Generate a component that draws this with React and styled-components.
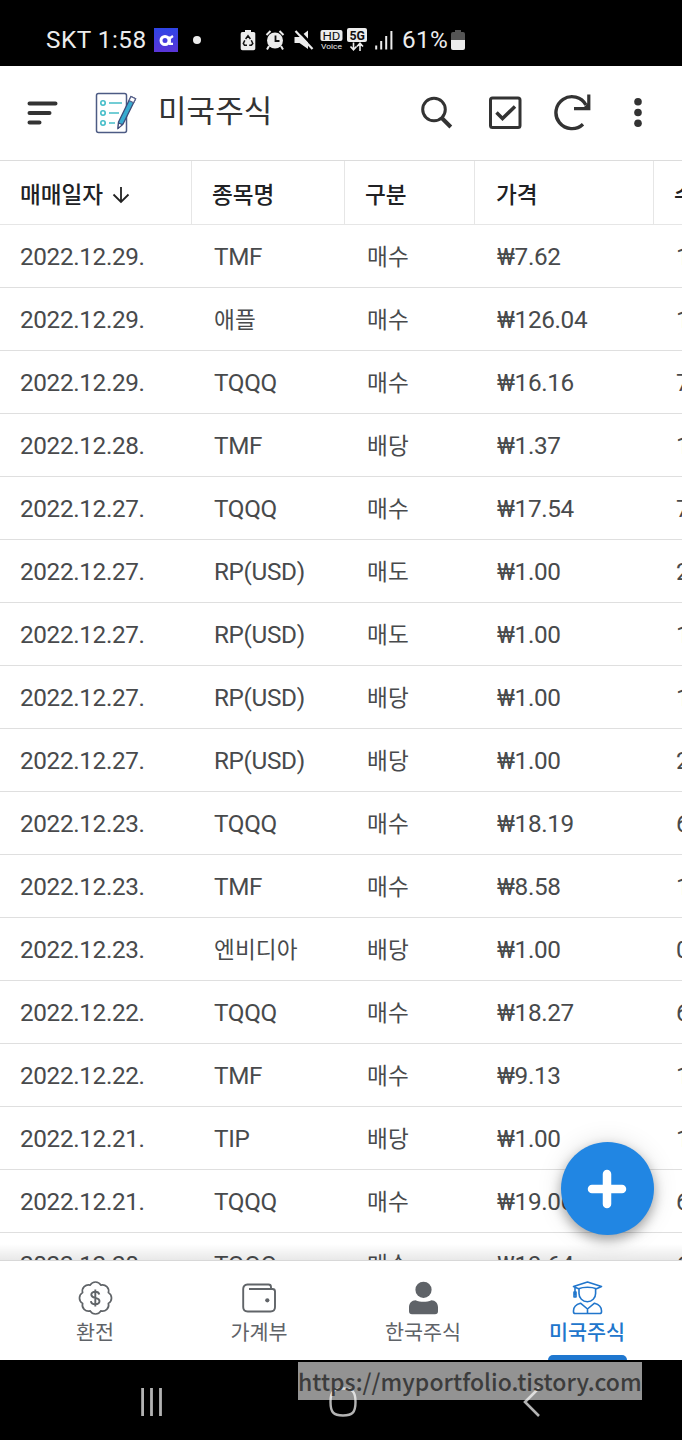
import React from 'react';
import styled, { createGlobalStyle } from 'styled-components';

const GlobalStyle = createGlobalStyle`
  * { box-sizing: border-box; }
  html, body { margin: 0; padding: 0; background: #000; overflow: hidden; }
  body { font-family: Roboto, "Noto Sans CJK KR", sans-serif; }
`;

const Phone = styled.div`
  width: 682px;
  height: 1440px;
  display: flex;
  flex-direction: column;
  background: #fff;
  overflow: hidden;
`;

const StatusBar = styled.header`
  height: 66px;
  flex: none;
  display: flex;
  align-items: center;
  padding: 14px 0 0 46px;
  background: #000;
  color: #ececec;
  font-size: 24.3px;
  line-height: 28px;
`;

const Clock = styled.span`
  width: 108px;
  white-space: nowrap;
  letter-spacing: 0.5px;
`;

const BatteryText = styled.span`
  width: 47px;
  margin-left: 9px;
  white-space: nowrap;
  letter-spacing: 0.3px;
`;

const StatusIcon = styled.svg`
  flex: none;
  display: block;
  margin-left: ${(p) => p.$gap || 0}px;
`;

const AppBar = styled.div`
  height: 94px;
  flex: none;
  display: flex;
  align-items: center;
  padding-left: 26px;
  color: #333;
`;

const Icon = styled.svg`
  flex: none;
  display: block;
  margin-left: ${(p) => p.$gap || 0}px;
`;

const Title = styled.h1`
  margin: -2px 0 0 21px;
  width: 261px;
  font-size: 31px;
  line-height: 40px;
  font-weight: 400;
  letter-spacing: 0.1px;
`;

const Table = styled.main`
  flex: 1;
  min-height: 0;
  overflow: hidden;
  position: relative;
  border-top: 1px solid #dcdcdc;
`;

const Columns = styled.div`
  display: grid;
  grid-template-columns: 192px 153px 130px 179px 28px;
`;

const HeadRow = styled(Columns)`
  height: 64px;
  border-bottom: 1px solid #e6e6e6;
  font-size: 22.6px;
  font-weight: 500;
  color: #202124;
`;

const HeadCell = styled.div`
  display: flex;
  align-items: center;
  gap: 8px;
  padding: 2px 0 0 ${(p) => p.$inset || 20}px;
  border-right: 1px solid #e6e6e6;
  white-space: nowrap;
  overflow: hidden;

  &:last-child { border-right: 0; }
`;

const Row = styled(Columns)`
  height: 63px;
  border-bottom: 1px solid #dfdfdf;
  line-height: 64px;
  color: #484a4c;
`;

const Cell = styled.div`
  padding-left: ${(p) => p.$inset || 20}px;
  padding-top: ${(p) => (p.$hangul ? 1 : 0)}px;
  height: 62px;
  white-space: nowrap;
  overflow: hidden;
  font-size: ${(p) => (p.$hangul ? '22.6px' : '24.3px')};
  letter-spacing: ${(p) => (p.$hangul ? '0.1px' : '-0.35px')};
`;

const BottomFade = styled.div`
  position: absolute;
  left: 0;
  right: 0;
  bottom: 0;
  height: 16px;
  background: linear-gradient(rgba(0, 0, 0, 0), rgba(0, 0, 0, 0.09));
`;

const AddButton = styled.button`
  position: absolute;
  right: 28px;
  bottom: 25px;
  width: 93px;
  height: 93px;
  padding: 0 2px 0 0;
  border: 0;
  border-radius: 50%;
  background: #2186e3;
  display: flex;
  align-items: center;
  justify-content: center;
  box-shadow: 0 5px 12px rgba(0, 0, 0, 0.32), 0 1px 26px rgba(0, 0, 0, 0.13);
`;

const TabBar = styled.nav`
  height: 100px;
  flex: none;
  display: grid;
  grid-template-columns: repeat(4, 164px);
  padding: 0 13px;
  border-top: 1px solid #d8d8d8;
  background: #fff;
`;

const Tab = styled.div`
  position: relative;
  display: flex;
  flex-direction: column;
  align-items: center;
  padding-top: 18px;
  color: ${(p) => (p.$active ? '#2176cc' : '#5f6368')};
  font-size: 20.7px;
  font-weight: ${(p) => (p.$active ? 500 : 400)};
  line-height: 30px;
`;

const TabIcon = styled.svg`
  display: block;
  width: 38px;
  height: 38px;
  margin-bottom: 1px;
`;

const ActiveMark = styled.div`
  position: absolute;
  bottom: 0;
  width: 79px;
  height: 5px;
  border-radius: 5px 5px 0 0;
  background: #1f77cf;
`;

const SystemBar = styled.footer`
  height: 80px;
  flex: none;
  position: relative;
  background: #000;
  display: flex;
  align-items: center;
  padding: 4px 0 0 138px;
`;

const SystemIcon = styled.svg`
  position: relative;
  z-index: 1;
  flex: none;
  display: block;
  margin-left: ${(p) => p.$gap || 0}px;
  stroke: rgba(255, 255, 255, 0.7);
`;

const WatermarkPlate = styled.div`
  position: absolute;
  left: 298px;
  top: 2px;
  width: 344px;
  height: 38px;
  background: #939393;
`;

const WatermarkText = styled(WatermarkPlate)`
  z-index: 2;
  background: none;
  color: #3c3c3c;
  font-family: "Noto Sans CJK KR", sans-serif;
  font-size: 23px;
  font-weight: 500;
  line-height: 38px;
  letter-spacing: 0.04px;
  white-space: nowrap;
`;

const ROWS = [
  ['2022.12.29.', 'TMF', '매수', '₩7.62', '1'],
  ['2022.12.29.', '애플', '매수', '₩126.04', '1'],
  ['2022.12.29.', 'TQQQ', '매수', '₩16.16', '7'],
  ['2022.12.28.', 'TMF', '배당', '₩1.37', '1'],
  ['2022.12.27.', 'TQQQ', '매수', '₩17.54', '7'],
  ['2022.12.27.', 'RP(USD)', '매도', '₩1.00', '2'],
  ['2022.12.27.', 'RP(USD)', '매도', '₩1.00', '1'],
  ['2022.12.27.', 'RP(USD)', '배당', '₩1.00', '1'],
  ['2022.12.27.', 'RP(USD)', '배당', '₩1.00', '2'],
  ['2022.12.23.', 'TQQQ', '매수', '₩18.19', '6'],
  ['2022.12.23.', 'TMF', '매수', '₩8.58', '1'],
  ['2022.12.23.', '엔비디아', '배당', '₩1.00', '0'],
  ['2022.12.22.', 'TQQQ', '매수', '₩18.27', '6'],
  ['2022.12.22.', 'TMF', '매수', '₩9.13', '1'],
  ['2022.12.21.', 'TIP', '배당', '₩1.00', '1'],
  ['2022.12.21.', 'TQQQ', '매수', '₩19.06', '6'],
  ['2022.12.20.', 'TQQQ', '매수', '₩19.64', '6'],
];

const isHangul = (s) => /[가-힣]/.test(s);

function StatusIcons() {
  return (
    <>
      <StatusIcon width="24" height="24" viewBox="0 0 24 24">
        <defs>
          <linearGradient id="appBadge" x1="0" y1="0" x2="0" y2="1">
            <stop offset="0" stopColor="#2f45e6" />
            <stop offset="1" stopColor="#5a35d8" />
          </linearGradient>
        </defs>
        <rect width="24" height="24" fill="url(#appBadge)" />
        <circle cx="11" cy="12.500" r="4" fill="none" stroke="#fff" strokeWidth="3" />
        <path d="M15.800 8.500v7.300h3.200M15.500 10.500l3.500-2.500" fill="none" stroke="#fff" strokeWidth="2.200" />
      </StatusIcon>
      <StatusIcon $gap={15} width="8" height="8" viewBox="0 0 8 8">
        <circle cx="4" cy="4" r="4" fill="#ececec" />
      </StatusIcon>
      <StatusIcon $gap={39} width="16" height="22" viewBox="0 0 16 22">
        <path d="M5 1h6v2h2.500A1.800 1.800 0 0 1 15.300 5v14.500a1.800 1.800 0 0 1-1.800 1.800h-11A1.800 1.800 0 0 1 .7 19.500V5A1.800 1.800 0 0 1 2.500 3H5z" fill="#ececec" />
        <path d="M5.600 10l2.400-3.200 2.400 3.200M11.300 11.300l1.500 3.200-1.500 1.700H9.200M7 16.200H4.500L3.300 14.400l1.500-3" fill="none" stroke="#111" strokeWidth="1.500" />
      </StatusIcon>
      <StatusIcon $gap={9} width="20" height="22" viewBox="0 0 20 22">
        <circle cx="10" cy="11.500" r="8" fill="#ececec" />
        <path d="M1.500 6l4-4M18.500 6l-4-4M4 17l-2 3.500M16 17l2 3.500" stroke="#ececec" strokeWidth="2" />
        <path d="M10.500 6.500v5.500h4" stroke="#111" strokeWidth="1.800" fill="none" />
      </StatusIcon>
      <StatusIcon $gap={9} width="20" height="22" viewBox="0 0 20 22">
        <path d="M0.500 8h5L14 1.500v18.500l-8.500-6h-5z" fill="#ececec" />
        <path d="M4.500 1.500L20.500 18.500" stroke="#000" strokeWidth="2.600" />
        <path d="M1.500 2L18.500 20" stroke="#ececec" strokeWidth="2.200" />
      </StatusIcon>
      <StatusIcon $gap={6} width="23" height="22" viewBox="0 0 23 22">
        <rect x="0.500" y="1" width="22" height="11" rx="2" fill="#ececec" />
        <text x="2.500" y="10.500" textLength="18" lengthAdjust="spacingAndGlyphs" fontFamily="Roboto" fontSize="11" fill="#111">HD</text>
        <text x="1" y="19.800" textLength="21" lengthAdjust="spacingAndGlyphs" fontFamily="Roboto" fontSize="8" fill="#ececec">Voice</text>
      </StatusIcon>
      <StatusIcon $gap={4} width="20" height="24" viewBox="0 0 20 24">
        <rect width="20" height="14" rx="2" fill="#ececec" />
        <text x="2.500" y="12" textLength="15.500" lengthAdjust="spacingAndGlyphs" fontFamily="Roboto" fontSize="13.500" fontWeight="700" fill="#111">5G</text>
        <path d="M6.500 14.500v7M3.500 18.500l3 3.300 3-3.300M13 23v-7M10 18.500l3-3.300 3 3.300" stroke="#ececec" strokeWidth="1.600" fill="none" />
      </StatusIcon>
      <StatusIcon $gap={8} width="18" height="22" viewBox="0 0 18 22">
        <path d="M1.200 16.500v4M6.200 12v8.500M11.200 7v13.500M16.400 2v18.500" stroke="#ececec" strokeWidth="2" />
      </StatusIcon>
    </>
  );
}

function NoteIcon() {
  return (
    <Icon $gap={37} width="42" height="42" viewBox="0 0 42 42" fill="none">
      <rect x="1.500" y="1.500" width="30" height="39" rx="2" stroke="#4d5b84" strokeWidth="1.500" />
      <g stroke="#45bdc8" strokeWidth="1.600">
        <circle cx="8" cy="11" r="2.200" />
        <circle cx="8" cy="21" r="2.200" />
        <circle cx="8" cy="31" r="2.200" />
        <path d="M14 11h13M14 21h10M14 31h6" />
      </g>
      <path d="M23.500 30L36 4.500l4.600 2.300-12.400 25-5.200 4.500z" fill="#38abd0" stroke="#3d4a78" strokeWidth="1.300" strokeLinejoin="round" />
      <path d="M34 8.500L36 4.500l4.600 2.300-2 4z" fill="#fff" stroke="#57608a" strokeWidth="1.200" />
      <path d="M23.500 31l-.5 5.500 4.500-3.800z" fill="#fff" stroke="#3d4a78" strokeWidth="1.100" />
    </Icon>
  );
}

function Toolbar() {
  return (
    <AppBar>
      <Icon width="32" height="28" viewBox="0 0 32 28" stroke="#333" strokeWidth="4" strokeLinecap="round">
        <path d="M3.500 4.500h26M3.500 14h20M3.500 23.500h10" />
      </Icon>
      <NoteIcon />
      <Title>미국주식</Title>
      <Icon width="34" height="34" viewBox="0 0 34 34" fill="none" stroke="#333" strokeWidth="3">
        <circle cx="15" cy="13.500" r="11.300" />
        <path d="M22.800 22l9 9" strokeWidth="4" />
      </Icon>
      <Icon $gap={35} width="34" height="34" viewBox="0 0 34 34" fill="none" stroke="#333" strokeWidth="3">
        <rect x="2.500" y="2" width="29.500" height="29.500" rx="2" />
        <path d="M8.500 16.500l6 6L27 10.500" strokeWidth="3.500" />
      </Icon>
      <Icon $gap={31} width="38" height="38" viewBox="0 0 38 38" fill="none" stroke="#333" strokeWidth="3.400">
        <path d="M30 30.200A16 16 0 1 1 33 11" />
        <path d="M35.800 0.500v14.200H21" strokeWidth="3.200" />
        <path d="M29 15l6.500-6.500v6.500z" fill="#333" stroke="none" />
      </Icon>
      <Icon $gap={43} width="8" height="30" viewBox="0 0 8 30" fill="#333">
        <circle cx="4" cy="3.800" r="3.800" />
        <circle cx="4" cy="14.500" r="3.800" />
        <circle cx="4" cy="25.200" r="3.800" />
      </Icon>
    </AppBar>
  );
}

const scallop = (() => {
  let d = '';
  for (let i = 0; i <= 8; i += 1) {
    const a = ((i - 0.5) * Math.PI) / 4;
    const x = (19.5 + 14 * Math.sin(a)).toFixed(2);
    const y = (19 - 14 * Math.cos(a)).toFixed(2);
    d += i === 0 ? `M${x} ${y}` : `A6.2 6.2 0 0 1 ${x} ${y}`;
  }
  return `${d}Z`;
})();

function TabIcons({ name }) {
  if (name === 'exchange') {
    return (
      <TabIcon viewBox="0 0 38 38" fill="none" stroke="#606468" strokeWidth="1.700">
        <path d={scallop} />
        <path d="M23.300 15.500c-.4-1.700-1.900-2.700-4-2.700-2.300 0-4 1.100-4 3 0 4.300 8.200 2 8.200 6.300 0 2-1.800 3.200-4.200 3.200s-4.200-1.200-4.400-3.200M19.300 10.500v17" strokeWidth="1.900" />
      </TabIcon>
    );
  }
  if (name === 'wallet') {
    return (
      <TabIcon viewBox="0 0 38 38" fill="none" stroke="#606468" strokeWidth="1.900">
        <path d="M31 10V8q0-2.500-2.500-2.500H7.500Q3.200 6 3.200 10v18q0 4.500 4.500 4.500h22.800q4.500 0 4.500-4.500V12.500q0-2.500-2.500-2.500H9" />
        <circle cx="27.300" cy="21.300" r="2.100" fill="#606468" stroke="none" />
      </TabIcon>
    );
  }
  if (name === 'person') {
    return (
      <TabIcon viewBox="0 0 38 38" fill="#5f6368">
        <circle cx="19.500" cy="10.800" r="8.100" />
        <path d="M11.500 21.300c5 2 11 2 16 0 3.800 0 6.500 3.200 6.500 7v4q0 3-3 3H8q-3 0-3-3v-4c0-3.800 2.700-7 6.500-7z" />
      </TabIcon>
    );
  }
  return (
    <TabIcon viewBox="0 0 38 38" fill="none" stroke="#2176cc" strokeWidth="1.600" strokeLinejoin="round">
      <path d="M5.500 7.500L19.500 3l14 4.500-5 2.200c-5-2-13-2-18 0z" />
      <path d="M11 10v4.500c0 4.500 3.500 8.200 8.300 8.200s8.300-3.700 8.300-8.200V10" />
      <path d="M7 8.500v8M6 13h2v5H6z" />
      <path d="M12.500 24.200l7 5.800 7-5.800c4.500 1.300 7 4 7 7.500v1q0 1.800-1.800 1.800H7.300q-1.800 0-1.800-1.800v-1c0-3.500 2.500-6.200 7-7.500zM19.500 30v4" />
    </TabIcon>
  );
}

const TABS = [
  { name: 'exchange', label: '환전' },
  { name: 'wallet', label: '가계부' },
  { name: 'person', label: '한국주식' },
  { name: 'graduate', label: '미국주식', active: true },
];

const HEADINGS = ['종목명', '구분', '가격', '수량'];

export default function App() {
  return (
    <>
      <GlobalStyle />
      <Phone>
        <StatusBar>
          <Clock>SKT 1:58</Clock>
          <StatusIcons />
          <BatteryText>61%</BatteryText>
          <StatusIcon $gap={2} width="14" height="22" viewBox="0 0 14 22">
            <path d="M4 1h6v2h2q2 0 2 2v6H0V5q0-2 2-2h2z" fill="#555" />
            <path d="M0 11h14v8q0 2-2 2H2q-2 0-2-2z" fill="#ececec" />
          </StatusIcon>
        </StatusBar>
        <Toolbar />
        <Table>
          <HeadRow>
            <HeadCell>
              매매일자
              <svg width="20" height="20" viewBox="0 0 20 20" fill="none" stroke="#222" strokeWidth="1.800">
                <path d="M10 3v15M2.500 10.500l7.500 7.500 7.500-7.500" />
              </svg>
            </HeadCell>
            {HEADINGS.map((h) => (
              <HeadCell key={h} $inset={h === '가격' ? 21 : 20}>{h}</HeadCell>
            ))}
          </HeadRow>
          {ROWS.map(([date, name, kind, price, qty], i) => (
            <Row key={i}>
              <Cell>{date}</Cell>
              <Cell $inset={22} $hangul={isHangul(name)}>{name}</Cell>
              <Cell $inset={22} $hangul>{kind}</Cell>
              <Cell $inset={22}>{price}</Cell>
              <Cell $inset={22}>{qty}</Cell>
            </Row>
          ))}
          <BottomFade />
          <AddButton aria-label="추가">
            <svg width="40" height="40" viewBox="0 0 40 40" stroke="#fff" strokeWidth="8.500" strokeLinecap="round">
              <path d="M20 5v30M5 20h30" />
            </svg>
          </AddButton>
        </Table>
        <TabBar>
          {TABS.map((t) => (
            <Tab key={t.name} $active={t.active}>
              <TabIcons name={t.name} />
              {t.label}
              {t.active && <ActiveMark />}
            </Tab>
          ))}
        </TabBar>
        <SystemBar>
          <WatermarkPlate />
          <SystemIcon width="28" height="30" viewBox="0 0 28 30" strokeWidth="2.800">
            <path d="M3.600 1v28M12.500 1v28M21.500 1v28" transform="translate(1 0)" />
          </SystemIcon>
          <SystemIcon $gap={162} width="30" height="32" viewBox="0 0 30 32" fill="none" strokeWidth="2.400">
            <path d="M15 2.500c9.500 0 12.500 3 12.500 13.500S24.500 29.500 15 29.500 2.500 26.500 2.500 16 5.500 2.500 15 2.500z" />
          </SystemIcon>
          <SystemIcon $gap={164} width="20" height="30" viewBox="0 0 20 30" fill="none" strokeWidth="2.600">
            <path d="M17 1L3 15l14 14" />
          </SystemIcon>
          <WatermarkText>https://myportfolio.tistory.com</WatermarkText>
        </SystemBar>
      </Phone>
    </>
  );
}
